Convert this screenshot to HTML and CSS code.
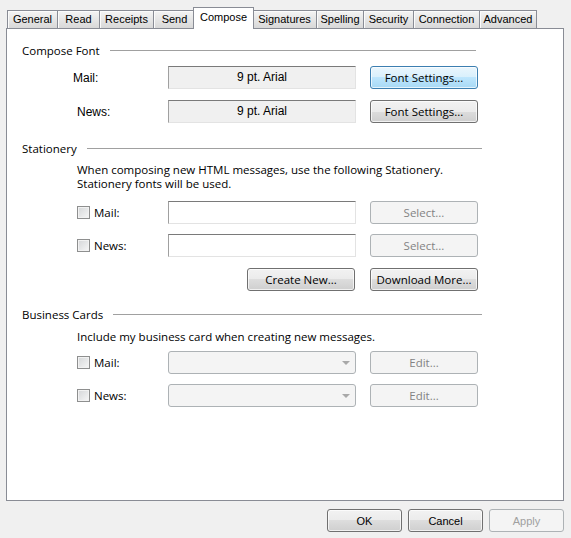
FILE: index.html
```html
<!DOCTYPE html>
<html>
<head>
<meta charset="utf-8">
<link rel="stylesheet" href="styles.css">
</head>
<body>
<div class="dialog">
  <div class="tabstrip">
    <div class="tab">General</div>
    <div class="tab">Read</div>
    <div class="tab">Receipts</div>
    <div class="tab">Send</div>
    <div class="tab active">Compose</div>
    <div class="tab">Signatures</div>
    <div class="tab">Spelling</div>
    <div class="tab">Security</div>
    <div class="tab">Connection</div>
    <div class="tab">Advanced</div>
  </div>
  <div class="panel">
    <section class="group g-font">
      <div class="group-head"><span>Compose Font</span><i class="rule"></i></div>
      <div class="row">
        <span class="lbl lbl-mail">Mail:</span>
        <div class="field ro">9 pt. Arial</div>
        <button class="btn hot">Font Settings...</button>
      </div>
      <div class="row">
        <span class="lbl">News:</span>
        <div class="field ro">9 pt. Arial</div>
        <button class="btn">Font Settings...</button>
      </div>
    </section>

    <section class="group g-stat">
      <div class="group-head"><span>Stationery</span><i class="rule"></i></div>
      <p class="desc">When composing new HTML messages, use the following Stationery.<br>Stationery fonts will be used.</p>
      <div class="row r-first">
        <label class="chk"><span class="box"></span>Mail:</label>
        <div class="field"></div>
        <button class="btn dis">Select...</button>
      </div>
      <div class="row r-tight">
        <label class="chk"><span class="box"></span>News:</label>
        <div class="field"></div>
        <button class="btn dis">Select...</button>
      </div>
      <div class="row">
        <span></span>
        <button class="btn create">Create New...</button>
        <button class="btn">Download More...</button>
      </div>
    </section>

    <section class="group g-card">
      <div class="group-head"><span>Business Cards</span><i class="rule"></i></div>
      <p class="desc">Include my business card when creating new messages.</p>
      <div class="row r-first2">
        <label class="chk"><span class="box"></span>Mail:</label>
        <div class="combo"><span class="arrow"></span></div>
        <button class="btn dis">Edit...</button>
      </div>
      <div class="row r-tight">
        <label class="chk"><span class="box"></span>News:</label>
        <div class="combo"><span class="arrow"></span></div>
        <button class="btn dis">Edit...</button>
      </div>
    </section>
  </div>
  <div class="footer">
    <button class="btn fbtn">OK</button>
    <button class="btn fbtn">Cancel</button>
    <button class="btn fbtn dis">Apply</button>
  </div>
</div>
</body>
</html>
```

FILE: styles.css
```css
html, body {
  margin: 0;
  padding: 0;
  background: #f0f0f0;
}
.dialog {
  width: 571px;
  height: 538px;
  box-sizing: border-box;
  padding: 7px 7px 0 6px;
  font-family: "Open Sans", "Noto Sans", sans-serif;
  font-size: 11.5px;
  color: #000;
}
.tabstrip {
  display: grid;
  grid-template-columns: 50px 42px 54px 42px 57px 64px 47px 50px 66px 57px;
  align-items: end;
  height: 21px;
  padding-left: 1px;
  position: relative;
  z-index: 2;
}
.tab {
  height: 18px;
  box-sizing: border-box;
  border: 1px solid #898c95;
  border-bottom: none;
  margin-right: -1px;
  background: linear-gradient(#f4f4f4, #e6e6e6 50%, #d8d8d8);
  box-shadow: inset 1px 1px 0 #fbfbfb;
  font-family: "Liberation Sans", Arial, sans-serif;
  font-size: 11px;
  line-height: 16px;
  text-align: center;
  white-space: nowrap;
}
.tab.active {
  height: 22px;
  margin: 0 -2px -1px -2px;
  background: #fff;
  box-shadow: none;
  line-height: 18px;
  position: relative;
}
.panel {
  height: 473px;
  box-sizing: border-box;
  border: 1px solid #898c95;
  background: #fff;
  padding-top: 13px;
}
.group-head {
  display: flex;
  align-items: center;
  height: 16px;
  padding-left: 15px;
  margin-right: 81px;
}
.g-font .group-head { margin-right: 87px; }
.rule {
  flex: 1;
  height: 1px;
  background: #a0a0a0;
  margin-left: 10px;
}
.row {
  display: grid;
  grid-template-columns: 77px 188px 108px;
  column-gap: 14px;
  align-items: center;
  height: 23px;
  padding-left: 70px;
  margin-top: 11px;
}
.g-font .group-head + .row { margin-top: 8px; }
.lbl {
  font-family: "Liberation Sans", Arial, sans-serif;
  font-size: 12px;
}
.lbl-mail { margin-left: -4px; }
.field {
  height: 23px;
  box-sizing: border-box;
  border: 1px solid #e3e3e3;
  border-top-color: #7a7a7a;
  border-left-color: #a0a0a0;
  background: #fff;
  font-family: "Liberation Sans", Arial, sans-serif;
  font-size: 12px;
  line-height: 21px;
  text-align: center;
}
.field.ro { background: #f0f0f0; }
.btn {
  height: 23px;
  box-sizing: border-box;
  border: 1px solid #707070;
  border-radius: 3px;
  background: linear-gradient(#f2f2f2 0%, #ebebeb 50%, #dddddd 50%, #cfcfcf 100%);
  box-shadow: inset 0 0 0 1px rgba(255,255,255,0.7);
  font: 11.5px "Open Sans", "Noto Sans", sans-serif;
  color: #000;
  padding: 0;
  margin: 0;
}
.btn.hot {
  border-color: #3c7fb1;
  background: linear-gradient(#eaf6fd 0%, #d9f0fc 50%, #bee6fd 50%, #a7d9f5 100%);
}
.btn.dis {
  border-color: #adb2b5;
  background: #f4f4f4;
  box-shadow: none;
  color: #838383;
}
.btn.create {
  width: 108px;
  justify-self: end;
  margin-right: 1px;
}
.group { margin: 0; }
.g-stat { margin-top: 17px; }
.g-card { margin-top: 15px; }
.desc {
  margin: 7px 0 0 70px;
  line-height: 14px;
}
.g-card .desc { margin-top: 8px; }
.g-stat .r-first { margin-top: 10px; }
.g-card .r-first2 { margin-top: 7px; }
.r-tight { margin-top: 10px; }
.chk {
  display: flex;
  align-items: center;
  gap: 4px;
}
.box {
  width: 13px;
  height: 13px;
  box-sizing: border-box;
  border: 1px solid #8e8f8f;
  background: linear-gradient(135deg, #d4d6d8, #f7f7f7);
  box-shadow: inset 0 0 0 1px #f2f2f2;
}
.combo {
  height: 23px;
  box-sizing: border-box;
  border: 1px solid #adb2b5;
  border-radius: 3px;
  background: #f4f4f4;
  position: relative;
}
.arrow {
  position: absolute;
  right: 5px;
  top: 9px;
  width: 0;
  height: 0;
  border-left: 4px solid transparent;
  border-right: 4px solid transparent;
  border-top: 4px solid #a8a8a8;
}
.footer {
  display: flex;
  justify-content: flex-end;
  gap: 6px;
  margin-top: 8px;
}
.fbtn {
  width: 75px;
  font-family: "Liberation Sans", Arial, sans-serif;
  font-size: 11px;
}
.fbtn.dis { color: #a0a0a0; }
```
